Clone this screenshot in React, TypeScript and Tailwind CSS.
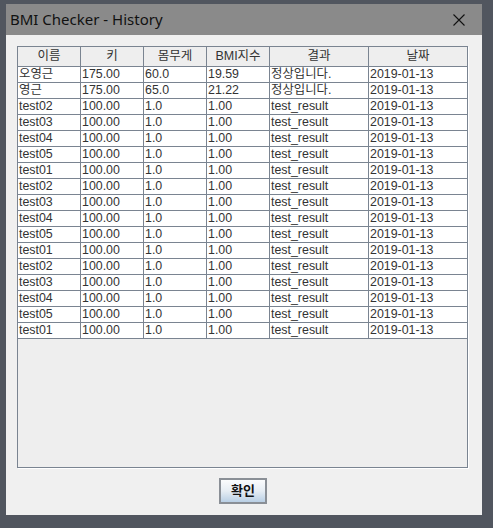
const columns = [
  { label: '이름', w: 'w-[63px]' },
  { label: '키', w: 'w-[63px]' },
  { label: '몸무게', w: 'w-[63px]' },
  { label: 'BMI지수', w: 'w-[63px]' },
  { label: '결과', w: 'w-[99px]' },
  { label: '날짜', w: 'w-[98px]' },
]

const rows: string[][] = [
  ['오영근', '175.00', '60.0', '19.59', '정상입니다.', '2019-01-13'],
  ['영근', '175.00', '65.0', '21.22', '정상입니다.', '2019-01-13'],
  ...['test02', 'test03', 'test04', 'test05', 'test01', 'test02', 'test03', 'test04', 'test05', 'test01', 'test02', 'test03', 'test04', 'test05', 'test01'].map(
    (name) => [name, '100.00', '1.0', '1.00', 'test_result', '2019-01-13']
  ),
]

const font = { fontFamily: '"Liberation Sans", "Noto Sans CJK KR", sans-serif' }

export default function App() {
  return (
    <div className="w-[493px] h-[528px] bg-[#51565f] pl-[6px] pt-[4px] overflow-hidden">
      <div className="w-[476px] h-[511px] flex flex-col bg-[#f0f0f0]">
        {/* title bar */}
        <div className="h-[31px] bg-[#8a8a8a] flex items-center justify-between pl-[4px] pr-[17px]">
          <span className="text-[15px] text-[#111] font-['Noto_Sans',sans-serif]">BMI Checker - History</span>
          <svg width="12" height="12" viewBox="0 0 12 12">
            <path d="M0.5 0.5 L11.5 11.5 M11.5 0.5 L0.5 11.5" stroke="#111" strokeWidth="1.1" />
          </svg>
        </div>

        <div className="flex-1 flex flex-col pt-[11px] pl-[11px]" style={font}>
          {/* scroll pane */}
          <div className="w-[451px] h-[422px] border border-[#7a8491] bg-[#eeeeee] shadow-[1px_1px_0_#ffffff]">
            <div className="flex h-[20px] border-b border-[#7a8491] bg-[#eeeeee]">
              {columns.map((c, i) => (
                <div
                  key={c.label}
                  className={`${c.w} ${i < columns.length - 1 ? 'border-r border-[#7a8491]' : ''} flex items-center justify-center text-[12.5px] text-[#333]`}
                >
                  {c.label}
                </div>
              ))}
            </div>
            {rows.map((r, ri) => (
              <div key={ri} className="flex h-[16px] border-b border-[#7a8491] bg-white">
                {r.map((v, i) => (
                  <div
                    key={i}
                    className={`${columns[i].w} ${i < columns.length - 1 ? 'border-r border-[#7a8491]' : ''} flex items-center pl-[1px] text-[12.4px] leading-none text-[#333] whitespace-nowrap overflow-hidden`}
                  >
                    {v}
                  </div>
                ))}
              </div>
            ))}
          </div>

          {/* button */}
          <button className="mt-[10px] ml-[202px] w-[48px] h-[26px] border-2 border-[#8a8f96] bg-gradient-to-b from-[#fbfcfd] via-[#e6edf4] to-[#b9cfe4] text-[13px] font-bold text-[#111] flex items-center justify-center">
            확인
          </button>
        </div>
      </div>
    </div>
  )
}
